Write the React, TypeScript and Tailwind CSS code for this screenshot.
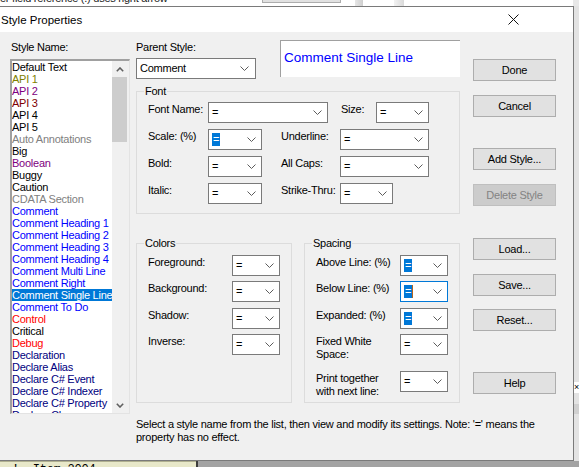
import React from "react";
import clsx from "clsx";

const BLUE = "text-[#0000ff]";
const NAVY = "text-[#000080]";

const styles: { name: string; color: string }[] = [
  { name: "Default Text", color: "text-black" },
  { name: "API 1", color: "text-[#808000]" },
  { name: "API 2", color: "text-[#800080]" },
  { name: "API 3", color: "text-[#800000]" },
  { name: "API 4", color: "text-black" },
  { name: "API 5", color: "text-black" },
  { name: "Auto Annotations", color: "text-[#808080]" },
  { name: "Big", color: "text-black" },
  { name: "Boolean", color: "text-[#800080]" },
  { name: "Buggy", color: "text-black" },
  { name: "Caution", color: "text-black" },
  { name: "CDATA Section", color: "text-[#808080]" },
  { name: "Comment", color: BLUE },
  { name: "Comment Heading 1", color: BLUE },
  { name: "Comment Heading 2", color: BLUE },
  { name: "Comment Heading 3", color: BLUE },
  { name: "Comment Heading 4", color: BLUE },
  { name: "Comment Multi Line", color: BLUE },
  { name: "Comment Right", color: BLUE },
  { name: "Comment Single Line", color: BLUE },
  { name: "Comment To Do", color: BLUE },
  { name: "Control", color: "text-[#ff0000]" },
  { name: "Critical", color: "text-black" },
  { name: "Debug", color: "text-[#ff0000]" },
  { name: "Declaration", color: NAVY },
  { name: "Declare Alias", color: NAVY },
  { name: "Declare C# Event", color: NAVY },
  { name: "Declare C# Indexer", color: NAVY },
  { name: "Declare C# Property", color: NAVY },
  { name: "Declare Class", color: NAVY },
];

function Chevron() {
  return (
    <svg width="9" height="5" viewBox="0 0 9 5" className="shrink-0">
      <polyline points="0.5,0.5 4.5,4.5 8.5,0.5" fill="none" stroke="#5c5c5c" strokeWidth="1" />
    </svg>
  );
}

function ScrollArrow({ up }: { up?: boolean }) {
  return (
    <svg width="8" height="5" viewBox="0 0 8 5">
      <polyline
        points={up ? "0.8,4.2 4,1 7.2,4.2" : "0.8,0.8 4,4 7.2,0.8"}
        fill="none"
        stroke="#606060"
        strokeWidth="1.6"
      />
    </svg>
  );
}

// combo box with "=" value
function Combo({
  w,
  value = "=",
  sel,
  focus,
}: {
  w: string;
  value?: string;
  sel?: boolean;
  focus?: boolean;
}) {
  return (
    <div
      className={clsx(
        "h-[21px] bg-white border flex items-center pl-[3px] pr-[5px] shrink-0",
        focus ? "border-[#0078d7]" : "border-[#7a7a7a]",
        w
      )}
    >
      {sel ? (
        <span className="flex items-center">
          <span className="bg-[#0078d7] text-white h-[13px] leading-[13px] px-[1px]">{value}</span>
          {focus && <span className="w-px h-[13px] bg-[#b5651d]" />}
        </span>
      ) : (
        <span className="leading-[13px]">{value}</span>
      )}
      <span className="ml-auto">
        <Chevron />
      </span>
    </div>
  );
}

function Label({ w, children }: { w: string; children: React.ReactNode }) {
  return <div className={clsx("leading-[13px] pt-[1px] shrink-0 whitespace-nowrap", w)}>{children}</div>;
}

function Group({ title, className, children }: { title: string; className: string; children: React.ReactNode }) {
  return (
    <fieldset className={clsx("border border-[#dcdcdc] pl-[11px]", className)}>
      <legend className="-ml-[4px] px-[1px] leading-[13px]">{title}</legend>
      {children}
    </fieldset>
  );
}

function Btn({ children, disabled, className }: { children: React.ReactNode; disabled?: boolean; className?: string }) {
  return (
    <div
      className={clsx(
        "w-[83px] h-[22px] border flex items-center justify-center",
        disabled ? "bg-[#cccccc] border-[#bfbfbf] text-[#838383]" : "bg-[#e1e1e1] border-[#adadad]",
        className
      )}
    >
      {children}
    </div>
  );
}

export default function App() {
  return (
    <div className="w-[579px] h-[467px] overflow-hidden bg-white flex flex-col text-[11px] tracking-[-0.25px] text-black font-['Liberation_Sans',Arial,sans-serif]">
      {/* app behind the dialog, top */}
      <div className="h-[6px] flex overflow-hidden shrink-0 bg-white">
        <div className="w-[262px] leading-[12px] -mt-[8px] whitespace-nowrap text-[#222]">er field reference (.) uses right arrow</div>
        <div className="w-[79px] h-[3px] border-b border-x border-[#adadad] bg-[#e1e1e1]" />
        <div className="w-[14px]" />
        <div className="w-[8px] bg-gradient-to-r from-[#e6e6e6] to-[#cfcfcf]" />
        <div className="w-[31px]" />
        <div className="w-[10px] bg-gradient-to-r from-[#f2f2f2] to-[#dadada]" />
        <div className="flex-1" />
        <div className="w-[6px] bg-[#e8e8e8]" />
      </div>

      <div className="flex h-[455px] shrink-0">
        {/* dialog */}
        <div className="w-[574px] border-t border-r border-b border-[#7a7a7a] bg-[#f0f0f0] flex flex-col">
          <div className="h-[25px] bg-white flex items-center shrink-0">
            <span className="pl-[1px] text-[11.5px] tracking-normal leading-[14px]">Style Properties</span>
            <svg width="11" height="11" viewBox="0 0 11 11" className="ml-auto mr-[54px]">
              <path d="M0.5 0.5 L10.5 10.5 M10.5 0.5 L0.5 10.5" stroke="#111" strokeWidth="1" />
            </svg>
          </div>

          <div className="flex flex-1 pl-[10px]">
            {/* style list */}
            <div className="w-[120px] pt-[9px] shrink-0">
              <div className="leading-[13px] pl-[1px]">Style Name:</div>
              <div className="mt-[5px] w-[120px] h-[355px] border-t-2 border-l-2 border-r border-b border-t-[#a0a0a0] border-l-[#a0a0a0] border-r-[#e3e3e3] border-b-[#e3e3e3] bg-white flex overflow-hidden">
                <div className="w-[100px] overflow-hidden">
                  {styles.map((s) => (
                    <div key={s.name} className={clsx("h-[12px] leading-[12px] whitespace-nowrap", s.color)}>
                      {s.name === "Comment Single Line" ? (
                        <span className="inline-block bg-[#0078d7] text-white pr-[1px]">{s.name}</span>
                      ) : (
                        s.name
                      )}
                    </div>
                  ))}
                </div>
                <div className="w-[17px] bg-[#f0f0f0] flex flex-col">
                  <div className="h-[16px] flex items-center justify-center pr-[2px] pt-[1px]">
                    <ScrollArrow up />
                  </div>
                  <div className="h-[65px] w-[15px] bg-[#cdcdcd]" />
                  <div className="flex-1" />
                  <div className="h-[16px] flex items-center justify-center pr-[2px]">
                    <ScrollArrow />
                  </div>
                </div>
              </div>
            </div>

            {/* properties */}
            <div className="w-[324px] ml-[6px] pt-[8px] shrink-0">
              <div className="flex">
                <div className="w-[120px] pt-[1px]">
                  <div className="leading-[13px]">Parent Style:</div>
                  <div className="mt-[4px] h-[21px] bg-white border border-[#7a7a7a] flex items-center pl-[3px] pr-[6px]">
                    <span>Comment</span>
                    <span className="ml-auto">
                      <Chevron />
                    </span>
                  </div>
                </div>
                <div className="ml-[24px] w-[180px] h-[37px] bg-white border-t border-l border-[#a0a0a0] flex items-center pl-[3px] pb-[2px]">
                  <span className="text-[#0000ff] text-[13.5px] tracking-normal leading-[16px]">Comment Single Line</span>
                </div>
              </div>

              <Group title="Font" className="mt-[6px] w-[324px] pt-[4px] pb-[9px]">
                <div className="flex flex-col gap-[6px]">
                  <div className="flex">
                    <Label w="w-[60px]">Font Name:</Label>
                    <Combo w="w-[120px]" />
                    <div className="w-[13px]" />
                    <Label w="w-[35px]">Size:</Label>
                    <Combo w="w-[53px]" />
                  </div>
                  <div className="flex">
                    <Label w="w-[60px]">Scale: (%)</Label>
                    <Combo w="w-[54px]" sel />
                    <div className="w-[19px]" />
                    <Label w="w-[59px]">Underline:</Label>
                    <Combo w="w-[89px]" />
                  </div>
                  <div className="flex">
                    <Label w="w-[60px]">Bold:</Label>
                    <Combo w="w-[54px]" />
                    <div className="w-[19px]" />
                    <Label w="w-[59px]">All Caps:</Label>
                    <Combo w="w-[89px]" />
                  </div>
                  <div className="flex">
                    <Label w="w-[60px]">Italic:</Label>
                    <Combo w="w-[54px]" />
                    <div className="w-[19px]" />
                    <Label w="w-[59px]">Strike-Thru:</Label>
                    <Combo w="w-[53px]" />
                  </div>
                </div>
              </Group>

              <div className="flex mt-[23px] gap-[12px] items-stretch">
                <Group title="Colors" className="w-[156px] pt-[5px]">
                  <div className="flex flex-col gap-[5px]">
                    <div className="flex">
                      <Label w="w-[84px]">Foreground:</Label>
                      <Combo w="w-[48px]" />
                    </div>
                    <div className="flex">
                      <Label w="w-[84px]">Background:</Label>
                      <Combo w="w-[48px]" />
                    </div>
                    <div className="flex mt-[1px]">
                      <Label w="w-[84px]">Shadow:</Label>
                      <Combo w="w-[48px]" />
                    </div>
                    <div className="flex">
                      <Label w="w-[84px]">Inverse:</Label>
                      <Combo w="w-[48px]" />
                    </div>
                  </div>
                </Group>
                <Group title="Spacing" className="w-[156px] pt-[5px] pb-[4px]">
                  <div className="flex flex-col gap-[5px]">
                    <div className="flex">
                      <Label w="w-[84px]">Above Line: (%)</Label>
                      <Combo w="w-[48px]" sel />
                    </div>
                    <div className="flex">
                      <Label w="w-[84px]">Below Line: (%)</Label>
                      <Combo w="w-[48px]" sel focus />
                    </div>
                    <div className="flex mt-[1px]">
                      <Label w="w-[84px]">Expanded: (%)</Label>
                      <Combo w="w-[48px]" sel />
                    </div>
                    <div className="flex">
                      <Label w="w-[84px]">
                        Fixed White
                        <br />
                        Space:
                      </Label>
                      <Combo w="w-[48px]" />
                    </div>
                    <div className="flex mt-[5px]">
                      <Label w="w-[84px]">
                        Print together
                        <br />
                        with next line:
                      </Label>
                      <Combo w="w-[48px]" />
                    </div>
                  </div>
                </Group>
              </div>

              <p className="mt-[15px] leading-[13px] w-[412px]">
                Select a style name from the list, then view and modify its settings. Note: '=' means the property has no
                effect.
              </p>
            </div>

            {/* buttons */}
            <div className="ml-[13px] pt-[27px] flex flex-col shrink-0">
              <Btn>Done</Btn>
              <Btn className="mt-[14px]">Cancel</Btn>
              <Btn className="mt-[31px]">Add Style...</Btn>
              <Btn className="mt-[14px]" disabled>
                Delete Style
              </Btn>
              <Btn className="mt-[32px]">Load...</Btn>
              <Btn className="mt-[14px]">Save...</Btn>
              <Btn className="mt-[13px]">Reset...</Btn>
              <Btn className="mt-[41px]">Help</Btn>
            </div>
          </div>
        </div>

        {/* app behind, right edge */}
        <div className="flex-1 bg-[#e3e3e3] flex flex-col">
          <div className="h-[376px]" />
          <div className="h-[11px] bg-white text-[9px] leading-[11px] overflow-hidden">×</div>
          <div className="h-[11px]" />
          <div className="h-[10px] bg-[#d0d0d0]" />
          <div className="flex-1" />
        </div>
      </div>

      {/* app behind, bottom */}
      <div className="flex-1 flex">
        <div className="w-[196px] bg-[#e8e8c9] border-t border-[#b0b090] overflow-hidden">
          <div className="leading-[12px] text-[12px] pt-[2px] pl-[12px] font-['Liberation_Mono',monospace]">'·  Item 2004</div>
        </div>
        <div className="w-[2px] bg-[#3c3c3c]" />
        <div className="flex-1 bg-[#a3a3a3]" />
      </div>
    </div>
  );
}
